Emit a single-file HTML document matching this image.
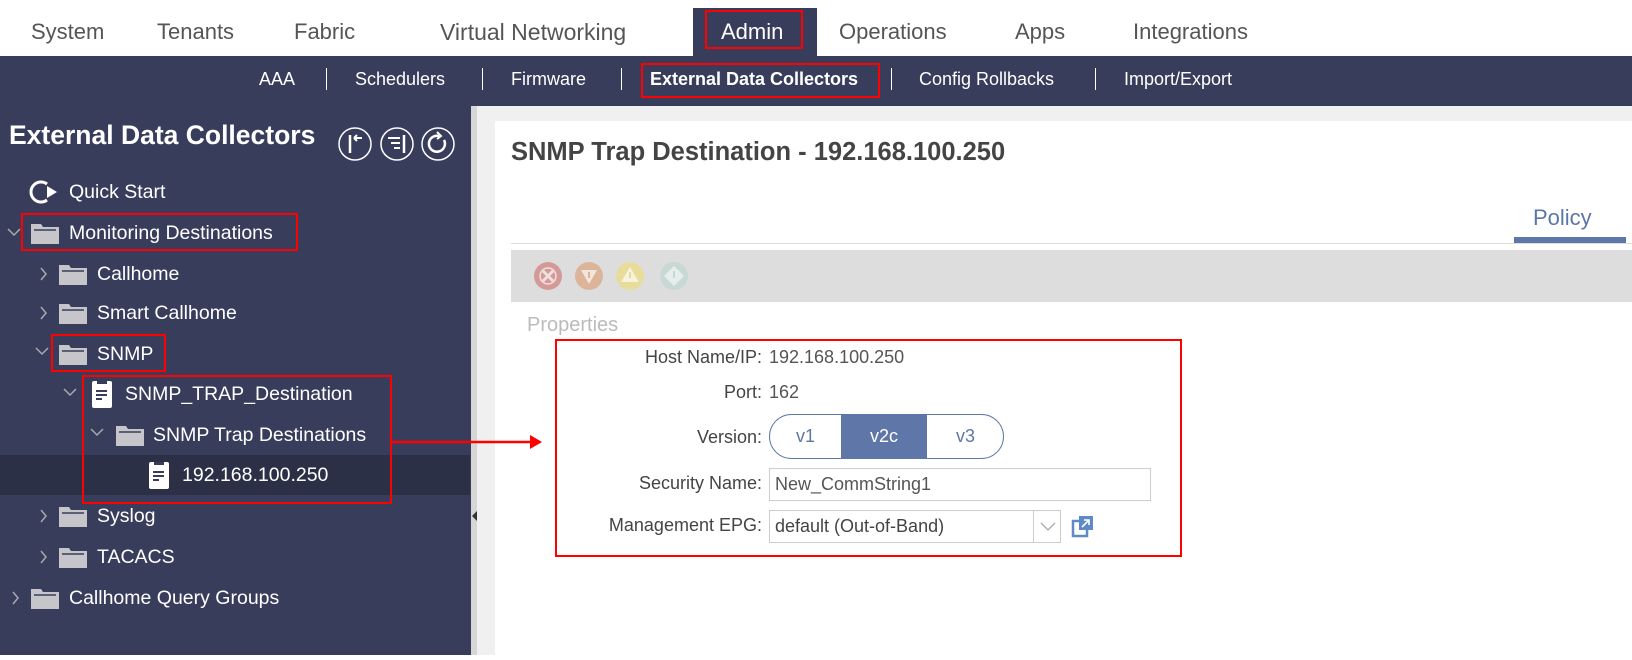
<!DOCTYPE html>
<html><head><meta charset="utf-8"><style>
*{margin:0;padding:0;box-sizing:border-box}
body{width:1632px;height:655px;overflow:hidden;position:relative;background:#fff;font-family:"Liberation Sans",sans-serif}
.a{position:absolute;white-space:nowrap}
.top{left:0;top:0;width:1632px;height:56px;background:#fff}
.tab{font-size:22px;color:#555;top:19px}
.sub{left:0;top:56px;width:1632px;height:50px;background:#383d5c}
.sl{font-size:18px;color:#fff;top:69px}
.sep{top:68px;width:1px;height:22px;background:#fff}
.left{left:0;top:106px;width:471px;height:549px;background:#383d5c}
.tr{font-size:19.5px;color:#fff}
.rb{border:2.5px solid #f00}
.lab{font-size:18px;color:#444;text-align:right;right:870px}
.val{font-size:18px;color:#555;left:769px}
</style></head><body>
<div class="a top"></div>
<div class="a tab" style="left:31px">System</div>
<div class="a tab" style="left:157px">Tenants</div>
<div class="a tab" style="left:294px">Fabric</div>
<div class="a tab" style="left:440px;font-size:23px">Virtual Networking</div>
<div class="a" style="left:693px;top:8px;width:124px;height:48px;background:#383d5c"></div>
<div class="a tab" style="left:721px;color:#fff">Admin</div>
<div class="a rb" style="left:705px;top:10px;width:98px;height:39px"></div>
<div class="a tab" style="left:839px">Operations</div>
<div class="a tab" style="left:1015px">Apps</div>
<div class="a tab" style="left:1133px">Integrations</div>

<div class="a sub"></div>
<div class="a sl" style="left:259px">AAA</div><div class="a sep" style="left:326px"></div>
<div class="a sl" style="left:355px">Schedulers</div><div class="a sep" style="left:482px"></div>
<div class="a sl" style="left:511px">Firmware</div><div class="a sep" style="left:621px"></div>
<div class="a sl" style="left:650px;font-weight:bold">External Data Collectors</div>
<div class="a rb" style="left:641px;top:63px;width:239px;height:35px"></div>
<div class="a sep" style="left:891px"></div>
<div class="a sl" style="left:919px">Config Rollbacks</div><div class="a sep" style="left:1095px"></div>
<div class="a sl" style="left:1124px">Import/Export</div>

<div class="a left"></div>
<div class="a" style="left:471px;top:106px;width:6px;height:549px;background:#d6d6d6"></div>
<div class="a" style="left:472px;top:511px;width:0;height:0;border-top:5px solid transparent;border-bottom:5px solid transparent;border-right:5px solid #333"></div>
<div class="a" style="left:477px;top:106px;width:1155px;height:549px;background:#f0f0f0"></div>
<div class="a" style="left:495px;top:121px;width:1137px;height:534px;background:#fff"></div>

<div class="a" style="left:9px;top:120px;font-size:26.5px;font-weight:bold;color:#fff">External Data Collectors</div>
<svg class="a" style="left:336px;top:126px" width="122" height="38" viewBox="0 0 122 38" fill="none" stroke="#fff" stroke-width="1.5">
<circle cx="19" cy="18" r="16"/><circle cx="61" cy="18" r="16"/><circle cx="102" cy="18" r="16"/>
<path d="M14 9v18" stroke-width="2.5"/><path d="M18 12h8M18 12l3-3M18 12l3 3" stroke-width="2"/>
<path d="M52 12h12M55 17h9M58 22h6" stroke-width="2"/><path d="M68 9v18" stroke-width="2.5"/>
<path d="M108 14a8 8 0 1 1-5-4" stroke-width="2.5"/><path d="M101 6l4 4-4 3" stroke-width="2"/>
</svg>

<svg class="a" width="470" height="560" style="left:0;top:100px">
<rect x="0" y="355" width="470" height="40" fill="#2c3046"/>
<path d="M47 84 a10 10 0 1 0 0 16" stroke="#fff" stroke-width="3" fill="none"/>
<path d="M47 86 l10 6 -10 6z" fill="#fff"/>
<defs><g id="f"><path d="M0 2h10l2 3h16v17H0z" fill="#c6c6ca"/><path d="M3 8h22" stroke="#383d5c" stroke-width="1.5"/></g>
<g id="d"><rect x="0" y="0" width="20" height="27" rx="2" fill="#fff"/><path d="M5 0h10v3H5z" fill="#383d5c"/><path d="M4 10h11M4 14h11M4 18h6" stroke="#383d5c" stroke-width="2"/></g></defs>
<use href="#f" x="31" y="122"/><use href="#f" x="59" y="163"/><use href="#f" x="59" y="202"/><use href="#f" x="59" y="243"/>
<use href="#d" x="92" y="281"/><use href="#f" x="116" y="324"/><use href="#d" x="149" y="362"/>
<use href="#f" x="59" y="405"/><use href="#f" x="59" y="446"/><use href="#f" x="31" y="487"/>
<g stroke="#aaa" stroke-width="1.5" fill="none">
<path d="M8 129l6 6 6-6"/><path d="M41 168l5 6-5 6"/><path d="M41 207l5 6-5 6"/><path d="M36 248l6 6 6-6"/>
<path d="M64 289l6 6 6-6"/><path d="M91 329l6 6 6-6"/>
<path d="M41 410l5 6-5 6"/><path d="M41 451l5 6-5 6"/><path d="M13 492l5 6-5 6"/>
</g>
</svg>
<div class="a tr" style="left:69px;top:181px">Quick Start</div>
<div class="a tr" style="left:69px;top:222px">Monitoring Destinations</div>
<div class="a tr" style="left:97px;top:263px">Callhome</div>
<div class="a tr" style="left:97px;top:302px">Smart Callhome</div>
<div class="a tr" style="left:97px;top:343px">SNMP</div>
<div class="a tr" style="left:125px;top:383px">SNMP_TRAP_Destination</div>
<div class="a tr" style="left:153px;top:424px">SNMP Trap Destinations</div>
<div class="a tr" style="left:182px;top:464px">192.168.100.250</div>
<div class="a tr" style="left:97px;top:505px">Syslog</div>
<div class="a tr" style="left:97px;top:546px">TACACS</div>
<div class="a tr" style="left:69px;top:587px">Callhome Query Groups</div>
<div class="a rb" style="left:21px;top:213px;width:277px;height:38px"></div>
<div class="a rb" style="left:51px;top:334px;width:115px;height:38px"></div>
<div class="a rb" style="left:82px;top:375px;width:310px;height:129px"></div>
<svg class="a" style="left:390px;top:432px" width="160" height="20"><path d="M2 10H150" stroke="#f00" stroke-width="2.5"/><path d="M140 3l12 7-12 7z" fill="#f00"/></svg>

<div class="a" style="left:511px;top:138px;font-size:25.5px;font-weight:bold;color:#444">SNMP Trap Destination - 192.168.100.250</div>
<div class="a" style="left:1533px;top:205px;font-size:22px;color:#5b77a9">Policy</div>
<div class="a" style="left:1514px;top:237px;width:112px;height:6px;background:#5f77a8"></div>
<div class="a" style="left:511px;top:243px;width:1121px;height:1px;background:#ddd"></div>
<div class="a" style="left:511px;top:250px;width:1121px;height:52px;background:#ddd"></div>
<svg class="a" style="left:532px;top:260px" width="160" height="32">
<circle cx="16" cy="16" r="14" fill="#d49a98"/><path d="M11 11l10 10M21 11l-10 10" stroke="#f0e0e0" stroke-width="3"/><circle cx="16" cy="16" r="8" fill="none" stroke="#f0e0e0" stroke-width="1.5"/>
<circle cx="57" cy="16" r="14" fill="#dcb49a"/><path d="M49 10h16l-8 14z" fill="#f2e6dc"/><path d="M57 12v6" stroke="#dcb49a" stroke-width="2"/>
<circle cx="98" cy="16" r="14" fill="#e8dc9a"/><path d="M98 7l9 15H89z" fill="#f6f2dc"/><path d="M98 12v6" stroke="#e8dc9a" stroke-width="2"/>
<circle cx="142" cy="16" r="14" fill="#c8d8d4"/><path d="M142 6l10 10-10 10-10-10z" fill="#e6eeec"/><path d="M142 11v7" stroke="#c8d8d4" stroke-width="2"/>
</svg>
<div class="a" style="left:527px;top:314px;font-size:20px;color:#bbb;font-weight:300">Properties</div>

<div class="a rb" style="left:555px;top:339px;width:627px;height:218px"></div>
<div class="a lab" style="top:347px">Host Name/IP:</div><div class="a val" style="top:347px">192.168.100.250</div>
<div class="a lab" style="top:382px">Port:</div><div class="a val" style="top:382px">162</div>
<div class="a lab" style="top:427px">Version:</div>
<div class="a" style="left:769px;top:414px;width:235px;height:45px;border:1px solid #5f77a8;border-radius:23px;overflow:hidden;font-size:18px;color:#5f77a8">
<div class="a" style="left:0;top:0;width:71px;height:43px;line-height:43px;text-align:center">v1</div>
<div class="a" style="left:71px;top:0;width:86px;height:43px;line-height:43px;text-align:center;background:#5f77a8;color:#fff">v2c</div>
<div class="a" style="left:157px;top:0;width:77px;height:43px;line-height:43px;text-align:center">v3</div></div>
<div class="a lab" style="top:473px">Security Name:</div>
<div class="a" style="left:769px;top:468px;width:382px;height:33px;border:1px solid #ccc"></div>
<div class="a val" style="left:775px;top:474px">New_CommString1</div>
<div class="a lab" style="top:515px">Management EPG:</div>
<div class="a" style="left:769px;top:510px;width:292px;height:33px;border:1px solid #ccc"></div>
<div class="a" style="left:1033px;top:510px;width:1px;height:33px;background:#ccc"></div>
<div class="a val" style="left:775px;top:516px;color:#444">default (Out-of-Band)</div>
<svg class="a" style="left:1038px;top:518px" width="20" height="16"><path d="M3 5l7 7 7-7" stroke="#aaa" fill="none" stroke-width="1.3"/></svg>
<svg class="a" style="left:1071px;top:514px" width="25" height="25"><rect x="2" y="7" width="14" height="15" fill="none" stroke="#5f8ac8" stroke-width="2.5"/><rect x="8" y="2" width="14" height="14" fill="#5f8ac8"/><path d="M11 13l7-7M13 6h5v5" stroke="#fff" stroke-width="1.6" fill="none"/></svg>
</body></html>
